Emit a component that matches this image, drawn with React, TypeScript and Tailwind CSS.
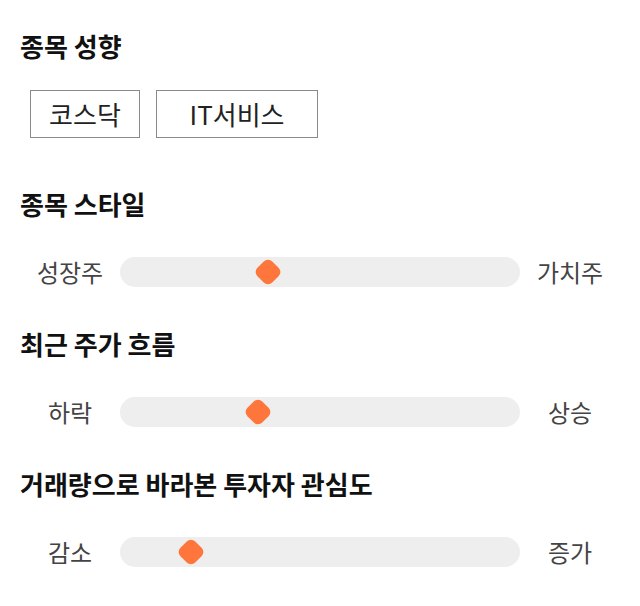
import type { ReactNode } from 'react'

const FONT = "font-['Noto_Sans_CJK_KR','Noto_Sans',sans-serif]"

function Heading({ children }: { children: ReactNode }) {
  return <h2 className="text-[26px] leading-[30px] font-bold text-[#111]">{children}</h2>
}

function Chip({ label, width }: { label: string; width: string }) {
  return (
    <div
      className={`${width} h-[48px] flex items-center justify-center border border-[#8a8a8a] text-[26px] leading-none text-[#222]`}
    >
      {label}
    </div>
  )
}

function Slider({ left, right, pos }: { left: string; right: string; pos: number }) {
  return (
    <div className="flex items-center h-[30px]">
      <div className="w-[100px] text-center text-[24px] leading-[30px] text-[#444]">{left}</div>
      <div className="relative flex-1 h-[30px] rounded-full bg-[#eeeeee]">
        {/* thumb: rotated rounded square */}
        <div
          className="absolute top-1/2 w-[21px] h-[21px] -translate-x-1/2 -translate-y-1/2 rotate-45 rounded-[6px] bg-[#ff763d]"
          style={{ left: `${pos}px` }}
        />
      </div>
      <div className="w-[100px] text-center text-[24px] leading-[30px] text-[#444]">{right}</div>
    </div>
  )
}

export default function App() {
  return (
    <div className={`${FONT} w-[640px] h-[606px] bg-white px-5 pt-[31px]`}>
      <Heading>종목 성향</Heading>
      <div className="flex gap-4 pl-[10px] mt-[29px]">
        <Chip label="코스닥" width="w-[110px]" />
        <Chip label="IT서비스" width="w-[162px]" />
      </div>

      <div className="mt-[51px]">
        <Heading>종목 스타일</Heading>
      </div>
      <div className="mt-[38px]">
        <Slider left="성장주" right="가치주" pos={148} />
      </div>

      <div className="mt-[42px]">
        <Heading>최근 주가 흐름</Heading>
      </div>
      <div className="mt-[38px]">
        <Slider left="하락" right="상승" pos={138} />
      </div>

      <div className="mt-[42px]">
        <Heading>거래량으로 바라본 투자자 관심도</Heading>
      </div>
      <div className="mt-[38px]">
        <Slider left="감소" right="증가" pos={71} />
      </div>
    </div>
  )
}
